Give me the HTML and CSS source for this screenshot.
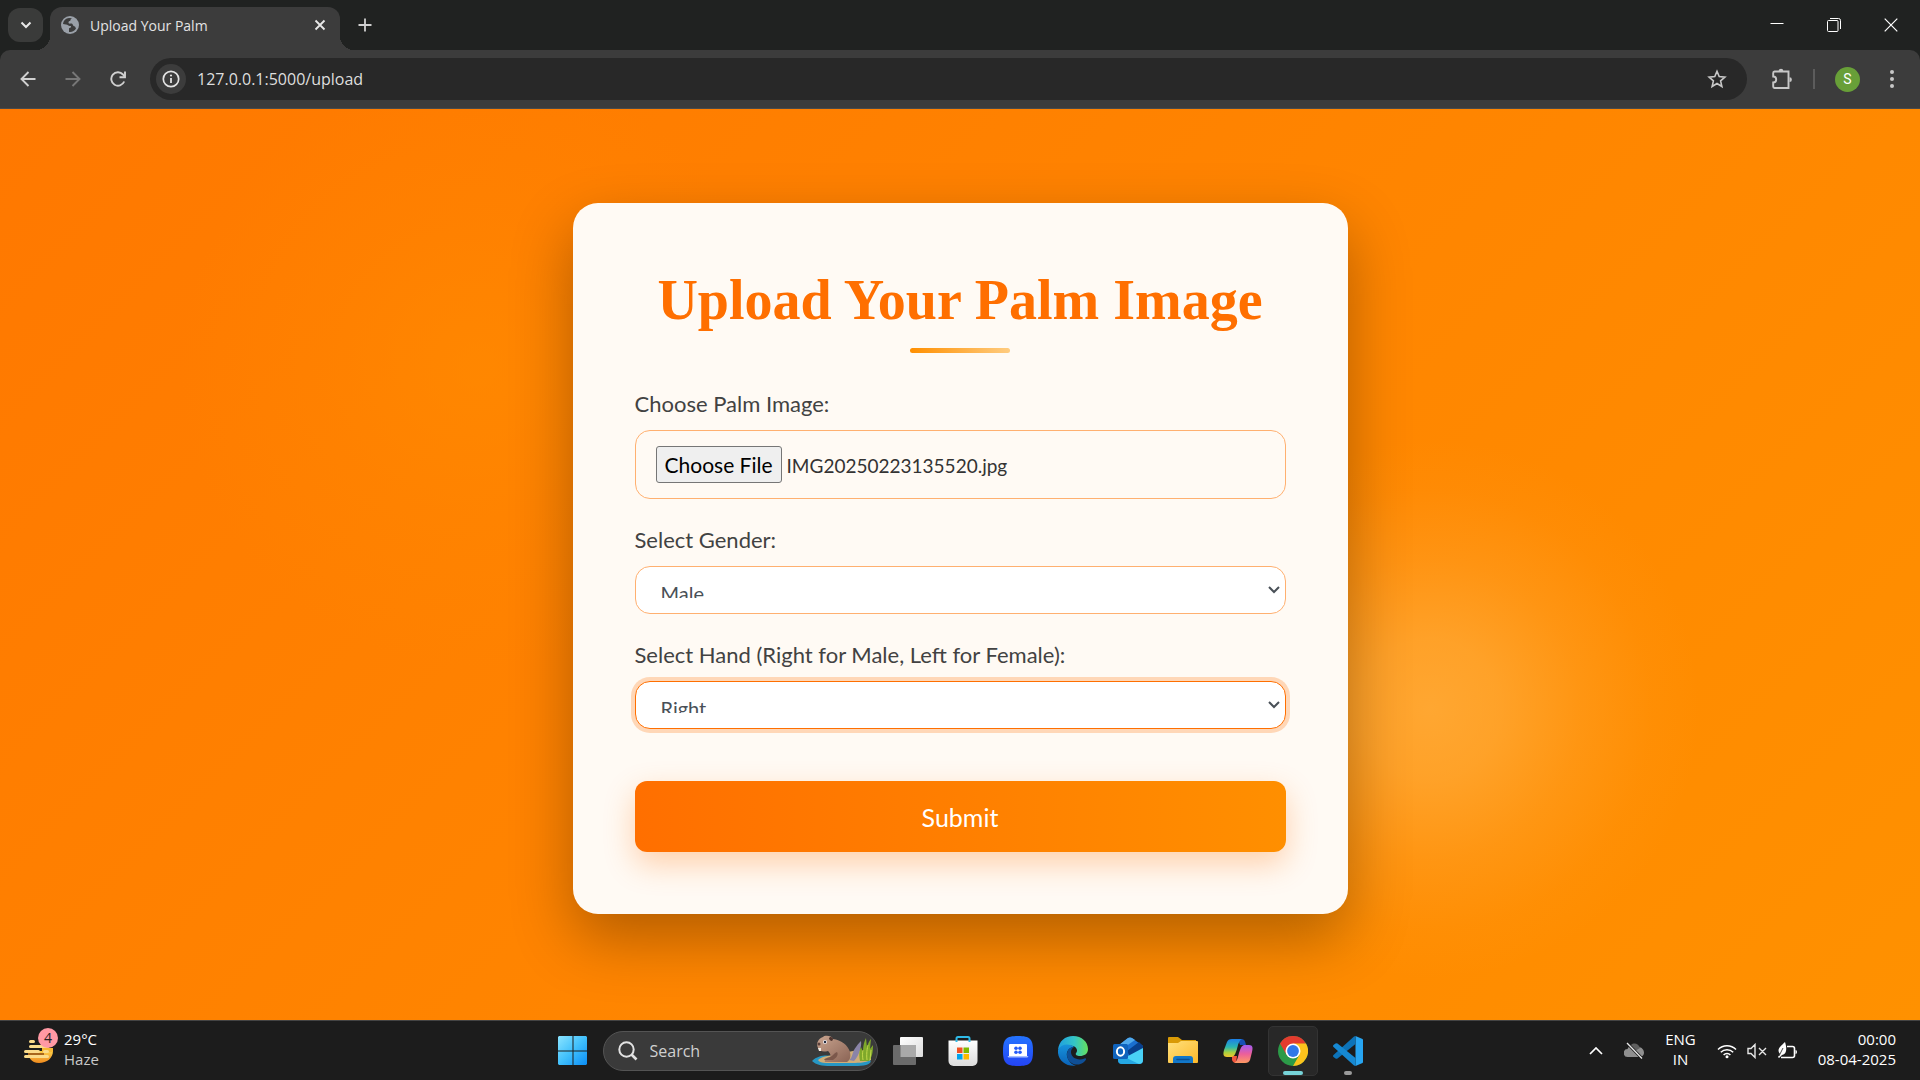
FILE: index.html
```html
<!DOCTYPE html>
<html lang="en">
<head>
<meta charset="utf-8">
<title>Upload Your Palm</title>
<link rel="stylesheet" href="styles.css">
</head>
<body>
<header class="browser">
  <div class="tabstrip">
    <button class="tab-search" type="button" aria-label="Search tabs"><svg width="12" height="12" viewBox="0 0 12 12"><path d="M1.5 3.5 6 8l4.500-4.500" fill="none" stroke="#e8e8e8" stroke-width="2"/></svg></button>
    <div class="tab">
      <svg width="18" height="18" viewBox="0 0 18 18"><circle cx="9" cy="9" r="9" fill="#9aa0a8"/><path d="M8 2C5 2.200 2.500 4.500 2 8l3 .5c2 0 2 1.500 4 1.500s1 2-1 2.200V16c3 .5 5.500-1 7-3.500l-1-2c-1.500 0-2-1-2.500-2.500-1.500-1-4 .5-4-1.500s2-1 2-2.500S11 3 11 2.300z" fill="#3c3c3c"/></svg>
      <span class="tab-title">Upload Your Palm</span>
      <button class="bare" type="button" aria-label="Close tab"><svg width="12" height="12" viewBox="0 0 12 12"><path d="m1.500 1.500 9 9m0-9-9 9" stroke="#e8e8e8" stroke-width="1.800"/></svg></button>
    </div>
    <button class="bare new-tab" type="button" aria-label="New tab"><svg width="14" height="14" viewBox="0 0 14 14"><path d="M7 .5v13M.5 7h13" stroke="#d0d0d0" stroke-width="1.800"/></svg></button>
    <div class="window-controls">
      <button class="bare" type="button" aria-label="Minimize"><svg width="14" height="14" viewBox="0 0 14 14"><path d="M.5 5.500h13" stroke="#fff"/></svg></button>
      <button class="bare" type="button" aria-label="Restore"><svg width="14" height="14" viewBox="0 0 14 14" fill="none" stroke="#fff"><rect x=".5" y="2.500" width="10.500" height="11" rx="1"/><path d="M3 .5h8.500a2 2 0 0 1 2 2V11"/></svg></button>
      <button class="bare" type="button" aria-label="Close"><svg width="14" height="14" viewBox="0 0 14 14"><path d="m.7.7 12.600 12.600m0-12.600L.7 13.300" stroke="#fff" stroke-width="1.200"/></svg></button>
    </div>
  </div>
  <div class="toolbar">
    <div class="nav">
      <button class="bare" type="button" aria-label="Back"><svg width="16" height="16" viewBox="0 0 16 16" fill="none" stroke="#d0d0d0" stroke-width="1.900"><path d="M15.500 8H2M8.500 1 1.500 8l7 7"/></svg></button>
      <button class="bare" type="button" aria-label="Forward"><svg width="16" height="16" viewBox="0 0 16 16" fill="none" stroke="#777" stroke-width="1.900"><path d="M.5 8H14M7.500 1l7 7-7 7"/></svg></button>
      <button class="bare" type="button" aria-label="Reload"><svg width="16" height="16" viewBox="0 0 16 16" fill="none" stroke="#d0d0d0" stroke-width="1.900"><path d="M14.200 10.500A6.700 6.700 0 1 1 13 3.500l1.500 2"/><path d="M15 .5v5.700H9.500"/></svg></button>
    </div>
    <div class="omnibox">
      <button class="site-info" type="button" aria-label="Site information"><svg width="18" height="18" viewBox="0 0 18 18"><circle cx="9" cy="9" r="7.700" fill="none" stroke="#e3e3e3" stroke-width="1.700"/><path d="M9 8v5" stroke="#e3e3e3" stroke-width="1.800"/><circle cx="9" cy="5.500" r="1.100" fill="#e3e3e3"/></svg></button>
      <input class="url" type="text" value="127.0.0.1:5000/upload" aria-label="Address">
      <button class="bare" type="button" aria-label="Bookmark"><svg width="20" height="20" viewBox="0 0 20 20"><path d="m10 2.300 2.200 5.300 5.700.5-4.300 3.800 1.300 5.600-4.900-3-4.900 3 1.300-5.600-4.300-3.800 5.700-.5z" fill="none" stroke="#c7c7c7" stroke-width="1.600"/></svg></button>
    </div>
    <div class="tools">
      <button class="bare" type="button" aria-label="Extensions"><svg width="22" height="22" viewBox="0 0 22 22"><path d="M3.500 3.500h14V20h-14a1.500 1.500 0 0 1-1.300-1.500v-4a3 3 0 0 0 0-6V5a1.500 1.500 0 0 1 1.300-1.500z" fill="none" stroke="#c7c7c7" stroke-width="1.900"/><path d="M7.700 3a2.300 2.300 0 0 1 4.600 0zM18.500 9.300a2.400 2.400 0 0 1 0 4.800z" fill="#c7c7c7"/></svg></button>
      <span class="divider"></span>
      <button class="avatar" type="button" aria-label="Profile">S</button>
      <button class="bare" type="button" aria-label="Menu"><svg width="4" height="18" viewBox="0 0 4 18" fill="#c7c7c7"><circle cx="2" cy="2" r="2"/><circle cx="2" cy="9" r="2"/><circle cx="2" cy="16" r="2"/></svg></button>
    </div>
  </div>
</header>

<main class="page">
  <form class="card">
    <h1 class="title">Upload Your Palm Image</h1>
    <div class="field">
      <label class="label" for="palm">Choose Palm Image:</label>
      <input class="file" id="palm" type="file">
    </div>
    <div class="field">
      <label class="label" for="gender">Select Gender:</label>
      <select class="select" id="gender"><option>Male</option><option>Female</option></select>
    </div>
    <div class="field">
      <label class="label" for="hand">Select Hand (Right for Male, Left for Female):</label>
      <select class="select" id="hand" autofocus><option>Right</option><option>Left</option></select>
    </div>
    <button class="submit" type="button">Submit</button>
  </form>
</main>

<footer class="taskbar">
  <div class="weather">
    <div class="weather-icon">
      <svg width="30" height="24" viewBox="0 0 30 24"><defs><linearGradient id="sun" x1="0" y1="0" x2="0" y2="1"><stop offset="0" stop-color="#fcd04a"/><stop offset="1" stop-color="#f08a1e"/></linearGradient></defs><path d="M4 11h25c0 7-6 12-14 12S4 17 4 11z" fill="url(#sun)"/><path d="M18 8h11v4H18z" fill="#f7b733"/><path d="M4 13h16v2H4z" fill="#a8671c"/><g stroke="#fbdc8a" stroke-width="3" stroke-linecap="round"><path d="M6.500 1.500h3M6.500 6.500h17M1.500 11.500h13M20.500 11.500h3M1.500 16.500h22"/></g></svg>
      <span class="badge">4</span>
    </div>
    <div class="two-line"><span>29°C</span><span class="dim">Haze</span></div>
  </div>

  <div class="apps">
    <button class="app" type="button" aria-label="Start"><svg width="30" height="30" viewBox="0 0 30 30"><defs><linearGradient id="win" x1="0" y1="0" x2="1" y2="1"><stop offset="0" stop-color="#8be4ff"/><stop offset=".5" stop-color="#41c0fc"/><stop offset="1" stop-color="#0b8df5"/></linearGradient></defs><path d="M1 0h13.500v14.500H0V1zM15.500 0H28l1 1v13.500H15.500zM0 15.500h14.500V29H1l-1-1zM15.500 15.500H29V28l-1 1H15.500z" fill="url(#win)"/></svg></button>
    <label class="search">
      <svg width="20" height="20" viewBox="0 0 20 20" fill="none" stroke="#e2e2e2"><circle cx="8.500" cy="8.500" r="7.200" stroke-width="2"/><path d="m13.500 13.500 5 5" stroke-width="2.600"/></svg>
      <input class="search-input" type="text" placeholder="Search" aria-label="Search">
      <svg width="62" height="32" viewBox="0 0 62 32"><defs><linearGradient id="fur" x1="0" y1="0" x2="1" y2="1"><stop offset="0" stop-color="#c9a48f"/><stop offset="1" stop-color="#8b6455"/></linearGradient></defs><path d="M0 26c6-6 14-6 20-5l38 4c3 3-4 6-12 6H18C10 31 4 30 0 26z" fill="#2797c4"/><path d="M6 25c5-5 14-4 20-6l20-4c8 1 14 6 13 10-6 3-14 3-22 3H14c-4 0-7-1-8-3z" fill="#cfae78"/><path d="M37 25c4-2 3-9 7-13 2-3 5-6 5-6 1 5-2 15-7 20z" fill="#8a84a8"/><path d="M6 13c-2-5 0-9 5-11 1-2 9-2 10 2 8 1 15 6 17 13 1 5 0 8-3 10H13c-1-2 1-3 4-3 3-3 1-6-1-8-4 1-8 1-10-3z" fill="url(#fur)"/><path d="M18 22c3-1 4-4 7-5 2 3-1 6-4 8H12c1-2 3-2 6-3z" fill="#7c584b"/><circle cx="13" cy="7" r="2" fill="#f3eff1"/><circle cx="13" cy="7" r="1.200" fill="#222b40"/><path d="M17 4c0-3 4-2 4 0s-2 2-2 2z" fill="#4d342f"/><circle cx="7" cy="9" r="1.500" fill="#5c403a"/><path d="M6 13h3v3H7z" fill="#f5efe6"/><path d="M48 26C46 17 49 12 49 12l2 5c0-9 3-14 3-14l1 10c1-6 4-9 4-9l-1 10 3-4c0 8-1 12-4 16z" fill="#7fa82a"/><path d="M51 25c-1-6 0-10 0-10m4 10c-1-8 1-15 1-15m2 15 1-10" stroke="#c2d94c" fill="none"/></svg>
    </label>
    <button class="app" type="button" aria-label="Task view"><svg width="30" height="28" viewBox="0 0 30 28"><defs><linearGradient id="tv" x1="0" y1="0" x2="1" y2="1"><stop offset="0" stop-color="#fff"/><stop offset="1" stop-color="#dcdcdc"/></linearGradient></defs><rect x="7" y="0" width="23" height="20" rx="1" fill="url(#tv)"/><rect x="0" y="8" width="23" height="20" rx="1" fill="#6b6b6b"/><path d="M7.500 8H23v12H7.500z" fill="#a9a9a9"/></svg></button>
    <button class="app" type="button" aria-label="Microsoft Store"><svg width="30" height="30" viewBox="0 0 30 30"><defs><linearGradient id="bag" x1="0" y1="0" x2="0" y2="1"><stop offset="0" stop-color="#fff"/><stop offset="1" stop-color="#dcdcdc"/></linearGradient></defs><path d="M.5 4.500h29V25a5 5 0 0 1-5 5h-19a5 5 0 0 1-5-5z" fill="url(#bag)"/><path d="M8.500 6V2.500A1.500 1.500 0 0 1 10 1h10a1.500 1.500 0 0 1 1.500 1.500V6" fill="none" stroke="#2fbbe8" stroke-width="2"/><path d="M9 11.500h5.500V17H9z" fill="#f25022"/><path d="M15.500 11.500H21V17h-5.500z" fill="#7fba00"/><path d="M9 18h5.500v5.500H9z" fill="#00a4ef"/><path d="M15.500 18H21v5.500h-5.500z" fill="#ffb900"/></svg></button>
    <button class="app" type="button" aria-label="PC Manager"><svg width="30" height="30" viewBox="0 0 30 30"><defs><linearGradient id="pc" x1="0" y1="0" x2="0" y2="1"><stop offset="0" stop-color="#2474ff"/><stop offset="1" stop-color="#2444f5"/></linearGradient></defs><path d="M15 0c12 0 15 3 15 15s-3 15-15 15S0 27 0 15 3 0 15 0z" fill="url(#pc)"/><path d="M7 8h16a1 1 0 0 1 1 1v11H6V9a1 1 0 0 1 1-1z" fill="#fff"/><path d="M4.500 20h21l-1 1.500h-19z" fill="#a9bfff"/><g fill="#245bf8"><circle cx="13" cy="12.300" r="1.800"/><circle cx="17" cy="12.300" r="1.800"/><circle cx="13" cy="16.300" r="1.800"/><circle cx="17" cy="16.300" r="1.800"/></g></svg></button>
    <button class="app" type="button" aria-label="Edge"><svg width="30" height="30" viewBox="0 0 30 30"><defs><linearGradient id="e1" x1="0" y1="0" x2="1" y2="0"><stop offset="0" stop-color="#1f9fe0"/><stop offset=".55" stop-color="#34c5c6"/><stop offset="1" stop-color="#65e05c"/></linearGradient><linearGradient id="e2" x1="0" y1="0" x2="0" y2="1"><stop offset="0" stop-color="#1793dc"/><stop offset="1" stop-color="#0a62b8"/></linearGradient></defs><path d="M0 14C1 5 7 0 15 0c9 0 15 6 15 13 0 5-4 7-8 7-3 0-5-1-4-3 2-2 1-6-3-7-6-2-12 0-15 4z" fill="url(#e1)"/><path d="M0 14c3-6 11-7 16-3-5 0-8 5-7 9 1 5 5 9 9 9.700C8 31-1 24 0 14z" fill="url(#e2)"/><path d="M16 11c-5-1-9 6-6 12 3 6 11 8 17 2 2-2 1-3-.500-2.500C20 25 13 22 13 16c0-2 1-4 3-5z" fill="#0f4f96"/></svg></button>
    <button class="app" type="button" aria-label="Outlook"><svg width="30" height="28" viewBox="0 0 30 28"><path d="m6 8 9-7q2-1 4 0l11 8v14a4 4 0 0 1-4 4H9a4 4 0 0 1-4-4z" fill="#1a6fd0"/><path d="m6 8 9-7q2-1 4 0l3 2L6 14z" fill="#50a9ec"/><path d="M14 14 26 5l4 4v3l-13 8z" fill="#083f8c"/><path d="M30 11v12a4 4 0 0 1-4 4H8l7-8z" fill="#49d1f6"/><path d="m5 17 21 10H9a4 4 0 0 1-4-4z" fill="#25a7e3"/><rect x="0" y="7" width="15" height="15" rx="1.500" fill="#0f63bd"/><ellipse cx="7.500" cy="14.500" rx="3.600" ry="4.200" fill="none" stroke="#fff" stroke-width="2"/></svg></button>
    <button class="app" type="button" aria-label="File Explorer"><svg width="30" height="27" viewBox="0 0 30 27"><defs><linearGradient id="fo" x1="0" y1="0" x2="1" y2="1"><stop offset="0" stop-color="#ffe07c"/><stop offset="1" stop-color="#fdb92a"/></linearGradient></defs><path d="M0 1q0-1 1-1h9l4 3h14v8H0z" fill="#d99a06"/><path d="M0 6h10l3-2h16q1 0 1 1v20q0 1-1 1H1q-1 0-1-1z" fill="url(#fo)"/><path d="M5 26v-4a3 3 0 0 1 3-3h14a3 3 0 0 1 3 3v4z" fill="#1277c9"/><path d="M9 22.500h12" stroke="#0b4f92" stroke-width="1.500" stroke-linecap="round"/></svg></button>
    <button class="app" type="button" aria-label="Copilot"><svg width="30" height="26" viewBox="0 0 30 26"><defs><linearGradient id="c1" x1="0" y1="0" x2="0" y2="1"><stop offset="0" stop-color="#1c7fe8"/><stop offset=".45" stop-color="#2bb7b0"/><stop offset=".75" stop-color="#a8d13f"/><stop offset="1" stop-color="#f2c32d"/></linearGradient><linearGradient id="c2" x1="0" y1="0" x2="0" y2="1"><stop offset="0" stop-color="#a35bf2"/><stop offset=".5" stop-color="#ec5f9a"/><stop offset="1" stop-color="#ff9a63"/></linearGradient></defs><path d="M15 1h4q3 0 4 6h-6z" fill="#174fb4"/><path d="M9 18h5l-1 7q-3 0-4-3z" fill="#f0563d"/><path d="M9 1h10c-3 1-4 6-5 10-2 6-3 8-6 8H4c-4 0-4-3-3-7L4 4c1-2 2-3 5-3z" fill="url(#c1)"/><path d="M22 25H11c3-1 4-6 5-10 2-6 3-8 6-8h4c4 0 4 3 3 7l-2 8c-1 2-2 3-5 3z" fill="url(#c2)"/></svg></button>
    <button class="app app-active" type="button" aria-label="Chrome"><svg width="30" height="30" viewBox="0 0 30 30"><circle cx="15" cy="15" r="15" fill="#2c9a48"/><path d="M2 7.500A15 15 0 0 1 28 7.500L15 9 8.500 18.700z" fill="#e33b2e"/><path d="M15 7.500h13A15 15 0 0 1 15 30l6.500-11.200z" fill="#fcc31c"/><circle cx="15" cy="15" r="7.500" fill="#fff"/><circle cx="15" cy="15" r="5.900" fill="#2f78e8"/></svg></button>
    <button class="app app-open" type="button" aria-label="Visual Studio Code"><svg width="30" height="30" viewBox="0 0 30 30"><path d="m22.500 0 7 3q.5.300.5 1v22q0 .700-.5 1l-7 3z" fill="#27a5f2"/><path d="M22.500 0v8L4.500 22.500q-1 .500-2 0L.5 21q-1-1 0-2L21 .5z" fill="#0d73b8"/><path d="M22.500 30v-8L4.500 7.500q-1-.500-2 0L.5 9q-1 1 0 2L21 29.500z" fill="#1689d3"/></svg></button>
  </div>

  <div class="tray">
    <svg width="14" height="8" viewBox="0 0 14 8"><path d="m1 7 6-6 6 6" fill="none" stroke="#fff" stroke-width="1.700"/></svg>
    <svg width="20" height="18" viewBox="0 0 20 18"><path d="M4 15a4 4 0 0 1-.5-8C5 3 11 1 14 5c4 0 6 3 6 6 0 2-2 4-4 4z" fill="#8f8f8f"/><path d="M7 3c3-3 8-1 9 3l-5 3z" fill="#5f5f5f"/><path d="m3 1 15 15.500" stroke="#1c1c1c" stroke-width="3"/><path d="m3 1 15 15.500" stroke="#e8e8e8" stroke-width="1.300"/></svg>
    <div class="two-line lang"><span>ENG</span><span>IN</span></div>
    <div class="status">
      <svg width="20" height="16" viewBox="0 0 20 16" fill="none" stroke="#fff" stroke-width="1.500"><path d="M1 6.500a12.500 12.500 0 0 1 18 0M3.800 9.300a8.700 8.700 0 0 1 12.400 0M6.600 12a4.800 4.800 0 0 1 6.800 0"/><circle cx="10" cy="13.700" r="1.500" fill="#fff" stroke="none"/></svg>
      <svg width="20" height="16" viewBox="0 0 20 16" fill="none" stroke="#e6e6e6" stroke-width="1.400"><path d="M1 5.500h3l4-4v13l-4-4H1zM12 5l7 7m0-7-7 7"/></svg>
      <svg width="20" height="18" viewBox="0 0 20 18"><path d="M10 4.500h5.500a2 2 0 0 1 2 2v7a2 2 0 0 1-2 2H4" fill="none" stroke="#fff" stroke-width="1.600"/><path d="M18.500 8q1.500 0 1.500 2t-1.500 2z" fill="#fff"/><path d="M8 0c2 6 2 12-3 13l-3 3-1-1 2-3C-1 7 4 4 8 0z" fill="#fff"/><path d="M2 14 6 6" stroke="#1c1c1c" stroke-width=".8"/></svg>
    </div>
    <div class="two-line clock"><span>00:00</span><span>08-04-2025</span></div>
  </div>
</footer>
<script src="script.js"></script>
</body>
</html>
```
FILE: styles.css
```css
* { box-sizing: border-box; }

body {
  display: flex;
  flex-direction: column;
  min-height: 100vh;
  margin: 0;
  background: #1c1c1c;
  color: #fff;
  font-family: "Open Sans", "Noto Sans", sans-serif;
  font-size: 14px;
}

svg { display: block; flex: none; }
button, input, select { font-family: inherit; }

.bare {
  padding: 0;
  border: 0;
  background: none;
}

/* Browser frame */
.browser { background: #202221; }

.tabstrip {
  display: flex;
  align-items: center;
  height: 50px;
  padding: 0 22px 0 8px;
}

.tab-search {
  display: grid;
  place-items: center;
  width: 35px;
  height: 34px;
  margin-right: 7px;
  padding: 0;
  border: 0;
  border-radius: 12px;
  background: #3a3b3a;
}

.tab {
  position: relative;
  display: flex;
  align-self: flex-end;
  align-items: center;
  gap: 11px;
  width: 290px;
  height: 43px;
  padding: 0 14px 7px 11px;
  border-radius: 12px 12px 0 0;
  background: #3c3c3c;
}

.tab::before,
.tab::after {
  content: "";
  position: absolute;
  bottom: 0;
  width: 14px;
  height: 14px;
}

.tab::before {
  right: 100%;
  background: radial-gradient(circle at 0 0, transparent 14px, #3c3c3c 14px);
}

.tab::after {
  left: 100%;
  background: radial-gradient(circle at 100% 0, transparent 14px, #3c3c3c 14px);
}

.tab-title { flex: 1; color: #e3e3e3; }
.new-tab { margin-left: 18px; }

.window-controls {
  display: flex;
  gap: 43px;
  margin-left: auto;
}

.toolbar {
  display: flex;
  align-items: center;
  gap: 24px;
  padding: 8px 26px 8px 20px;
  border-bottom: 1px solid #4a4a4a;
  border-radius: 10px 10px 0 0;
  background: #3c3c3c;
}

.nav { display: flex; gap: 29px; }

.omnibox {
  display: flex;
  flex: 1;
  align-items: center;
  gap: 11px;
  height: 42px;
  padding: 0 20px 0 6px;
  border-radius: 21px;
  background: #282828;
}

.site-info {
  display: grid;
  place-items: center;
  width: 30px;
  height: 30px;
  padding: 0;
  border: 0;
  border-radius: 50%;
  background: #3c3c3c;
}

.url {
  flex: 1;
  padding: 0;
  border: 0;
  outline: 0;
  background: none;
  color: #dedede;
  font-size: 16px;
}

.tools { display: flex; align-items: center; gap: 20px; }
.divider { width: 2px; height: 20px; background: #5c5c5c; }

.avatar {
  width: 25px;
  height: 25px;
  margin-right: 10px;
  padding: 0;
  border: 0;
  border-radius: 50%;
  background: #689f38;
  color: #fff;
  font-family: Roboto, sans-serif;
  font-size: 14px;
}

/* Upload page */
.page {
  display: flex;
  flex: 1;
  justify-content: center;
  align-items: flex-start;
  padding: 94px 20px 106px;
  background:
    radial-gradient(circle at 1430px 600px, rgba(255, 183, 77, .64), rgba(255, 183, 77, .52) 70px, rgba(255, 183, 77, .24) 150px, rgba(255, 183, 77, .06) 220px, rgba(255, 183, 77, 0) 270px),
    radial-gradient(circle at 480px 260px, rgba(255, 143, 0, .5), rgba(255, 143, 0, .2) 150px, rgba(255, 143, 0, 0) 300px),
    linear-gradient(135deg, #ff7800, #ff9100);
  color: #424242;
  font-family: Lato, sans-serif;
  font-size: 20px;
}

.card {
  display: flex;
  flex-direction: column;
  gap: 25px;
  width: 100%;
  max-width: 775px;
  padding: 62px;
  border-radius: 25px;
  background: #fffaf4;
  box-shadow: 0 25px 62px rgba(0, 0, 0, .3);
}

.title {
  margin: 0 0 10px;
  color: #ff6f00;
  font-family: "Liberation Serif", serif;
  font-size: 56px;
  line-height: 70px;
  text-align: center;
}

.title::after {
  content: "";
  display: block;
  width: 100px;
  height: 5px;
  margin: 13px auto 0;
  border-radius: 3px;
  background: linear-gradient(90deg, #ff8f00, #ffcc80);
}

.field { display: flex; flex-direction: column; gap: 10px; }
.label { font-size: 22px; line-height: 32px; }

.file {
  height: 69px;
  padding: 15px 20px;
  border: 1px solid #ffb070;
  border-radius: 15px;
  color: #333;
  font-size: 19px;
}

.file::file-selector-button {
  height: 37px;
  margin-right: 5px;
  padding: 0 8px;
  border: 1px solid #767676;
  border-radius: 3px;
  background: #efefef;
  color: #000;
  font-family: inherit;
  font-size: 21px;
}

.select {
  height: 48px;
  padding: 11px 25px 15px;
  border: 1px solid #ffb070;
  border-radius: 15px;
  outline: 0;
  background: #fff url("data:image/svg+xml,%3Csvg xmlns='http://www.w3.org/2000/svg' width='12' height='8'%3E%3Cpath d='m1 1 5 5 5-5' fill='none' stroke='%23495057' stroke-width='2'/%3E%3C/svg%3E") no-repeat right 5px center;
  color: #495057;
  font-size: 20px;
  line-height: 30px;
  appearance: none;
}

.select:focus {
  border-color: #ff6f00;
  box-shadow: 0 0 0 4px rgba(255, 111, 0, .25);
}

.submit {
  height: 71px;
  margin-top: 27px;
  border: 0;
  border-radius: 12px;
  background: linear-gradient(90deg, #ff6f00, #ff8f00);
  box-shadow: 0 12px 31px rgba(255, 111, 0, .3);
  color: #fff;
  font-size: 25px;
}

/* Desktop taskbar */
.taskbar {
  display: grid;
  grid-template-columns: 1fr auto 1fr;
  align-items: center;
  height: 60px;
  padding: 0 24px;
  border-top: 1px solid #444;
  background: #1c1c1c;
}

.weather { display: flex; align-items: center; gap: 10px; }
.weather-icon { position: relative; padding-top: 2px; }

.badge {
  position: absolute;
  top: -10px;
  right: -4px;
  width: 20px;
  height: 20px;
  border-radius: 50%;
  background: #ff99a4;
  color: #222;
  line-height: 20px;
  text-align: center;
}

.two-line {
  display: flex;
  flex-direction: column;
  padding-bottom: 4px;
  font-size: 15px;
  line-height: 20px;
}

.dim { color: #c8c8c8; }

.apps { display: flex; align-items: center; gap: 5px; }

.app {
  position: relative;
  display: grid;
  place-items: center;
  width: 50px;
  height: 50px;
  padding: 0;
  border: 1px solid transparent;
  border-radius: 5px;
  background: none;
}

.app-active { border-color: #333; background: #282828; }

.app-active::after,
.app-open::after {
  content: "";
  position: absolute;
  bottom: 0;
  width: 20px;
  height: 4px;
  border-radius: 2px;
  background: #76d3d8;
}

.app-open::after { width: 8px; background: #9a9a9a; }

.search {
  display: flex;
  align-items: center;
  gap: 12px;
  width: 275px;
  height: 40px;
  padding: 0 3px 0 14px;
  border: 1px solid #545454;
  border-radius: 20px;
  background: #3a3a3a;
}

.search-input {
  flex: 1;
  min-width: 0;
  padding: 0;
  border: 0;
  outline: 0;
  background: none;
  font-size: 16px;
}

.search-input::placeholder { color: #d0d0d0; }

.tray {
  display: flex;
  justify-content: flex-end;
  align-items: center;
  gap: 21px;
}

.lang { align-items: center; }
.status { display: flex; align-items: center; gap: 10px; }
.clock { align-items: flex-end; }
```
FILE: script.js
```js
const chosen = new DataTransfer();
chosen.items.add(new File([''], 'IMG20250223135520.jpg', { type: 'image/jpeg' }));
document.getElementById('palm').files = chosen.files;
```
